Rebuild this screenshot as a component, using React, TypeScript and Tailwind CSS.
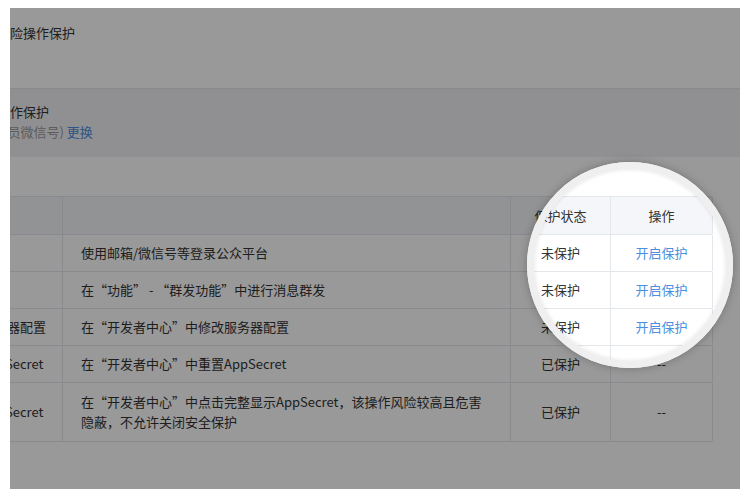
import React from "react";

type Row = {
  name: string;
  desc: React.ReactNode;
  status: string;
  action: string;
  h: string;
};

const rows: Row[] = [
  { name: "登录", desc: "使用邮箱/微信号等登录公众平台", status: "未保护", action: "开启保护", h: "h-[37px]" },
  { name: "群发消息", desc: "在“功能” - “群发功能”中进行消息群发", status: "未保护", action: "开启保护", h: "h-[37px]" },
  { name: "修改服务器配置", desc: "在“开发者中心”中修改服务器配置", status: "未保护", action: "开启保护", h: "h-[37px]" },
  { name: "重置AppSecret", desc: "在“开发者中心”中重置AppSecret", status: "已保护", action: "--", h: "h-[37px]" },
  {
    name: "查看AppSecret",
    desc: (
      <>
        在“开发者中心”中点击完整显示AppSecret，该操作风险较高且危害
        <br />
        隐蔽，不允许关闭安全保护
      </>
    ),
    status: "已保护",
    action: "--",
    h: "h-[59px]",
  },
];

function SecurityTable() {
  return (
    <div className="ml-[-70px] w-[772px] border-t border-l border-[#e3e6eb] text-[13px] text-[#333]">
      <div className="grid grid-cols-[122px_448px_100px_102px] h-[38px] bg-[#f4f6f9] border-b border-[#e3e6eb]">
        <div className="flex items-center pl-[14px] border-r border-[#e3e6eb]">类型</div>
        <div className="border-r border-[#e3e6eb]" />
        <div className="flex items-center justify-center border-r border-[#e3e6eb]">保护状态</div>
        <div className="flex items-center justify-center border-r border-[#e3e6eb]">操作</div>
      </div>
      {rows.map((r) => (
        <div
          key={r.name}
          className={`grid grid-cols-[122px_448px_100px_102px] ${r.h} bg-white border-b border-[#e3e6eb]`}
        >
          <div className="flex items-center pl-[14px] border-r border-[#e3e6eb] whitespace-nowrap">{r.name}</div>
          <div className="flex items-center pl-[18px] leading-[20px] border-r border-[#e3e6eb] whitespace-nowrap">
            <span>{r.desc}</span>
          </div>
          <div className="flex items-center justify-center border-r border-[#e3e6eb]">{r.status}</div>
          <div
            className={`flex items-center justify-center border-r border-[#e3e6eb] ${
              r.action === "--" ? "text-[#333]" : "text-[#4a8fe0]"
            }`}
          >
            {r.action}
          </div>
        </div>
      ))}
    </div>
  );
}

export default function App() {
  return (
    <div
      lang="zh-CN"
      className="w-[750px] h-[497px] bg-white pt-[8px] pl-[10px] font-['Noto_Sans_CJK_SC','Liberation_Sans',sans-serif]"
    >
      <div className="relative w-[730px] h-[481px] overflow-hidden bg-white">
        <div className="h-[80px] pt-[15px] text-[13px] leading-[20px] text-[#333]">
          <div className="ml-[-26px] whitespace-nowrap">高风险操作保护</div>
        </div>
        <div className="h-[69px] border-t border-[#e3e6ea] bg-[#f0f1f3] pt-[13px] text-[13px] leading-[20px]">
          <div className="ml-[-13px] whitespace-nowrap text-[#333]">操作保护</div>
          <div className="ml-[-33px] whitespace-nowrap text-[#999]">
            (管理员微信号) <span className="text-[#4a8fe0]">更换</span>
          </div>
        </div>
        <div className="h-[39px]" />
        <SecurityTable />

        {/* spotlight: the ring lets the page show through, the shadow greys the rest */}
        <div className="absolute left-[517px] top-[154px] w-[206px] h-[206px] rounded-full border-[7px] border-[#efefef] shadow-[0_0_8px_rgba(0,0,0,0.25),inset_0_0_4px_rgba(0,0,0,0.12),0_0_0_1200px_rgba(0,0,0,0.4)]" />
      </div>
    </div>
  );
}
